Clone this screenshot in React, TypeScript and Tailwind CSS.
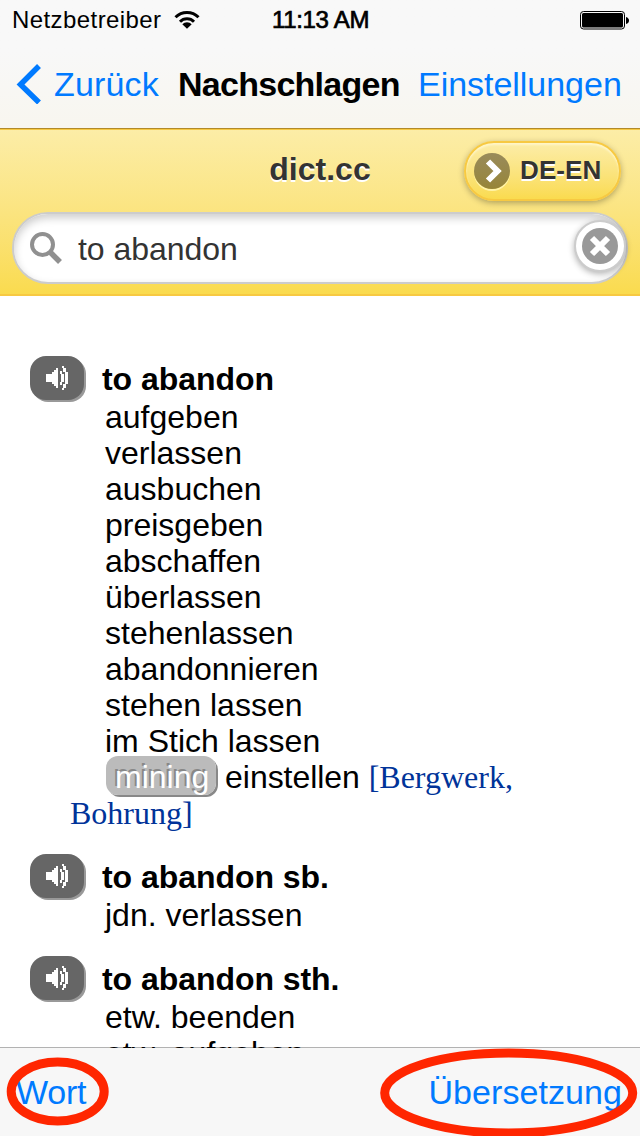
import type { ReactNode } from 'react';

function Speaker() {
  return (
    <span className="mb-0.5 flex h-11 w-[54px] shrink-0 items-center justify-center rounded-[16px] bg-[#666] shadow-[2px_2px_0_#999]">
      <svg width="22" height="26" viewBox="0 0 22 26" shapeRendering="crispEdges" fill="#fff">
        <path d="M0 9h6v-2h2v-2h2v-2h2v20h-2v-2h-2v-2h-2v-2h-6z" />
        <path d="M14 6h2v3h2v8h-2v3h-2v-3h1v-8h-1z" />
        <path d="M16 1h2v2h2v4h2v12h-2v4h-2v2h-2v-2h1v-4h2v-12h-2v-4h-1z" />
      </svg>
    </span>
  );
}

function Entry({ term, children }: { term: string; children: ReactNode }) {
  return (
    <section className="mb-7">
      <div className="flex h-9 items-center">
        <Speaker />
        <h2 className="ml-[18px] whitespace-nowrap font-bold tracking-[-0.05px]">{term}</h2>
      </div>
      <div className="mt-0.5 pl-10">{children}</div>
    </section>
  );
}

const line = 'pl-[35px] whitespace-nowrap';

const translations = [
  'aufgeben', 'verlassen', 'ausbuchen', 'preisgeben', 'abschaffen', 'überlassen',
  'stehenlassen', 'abandonnieren', 'stehen lassen', 'im Stich lassen',
];

export default function App() {
  return (
    <div className="relative flex h-[1136px] w-[640px] flex-col overflow-hidden bg-white font-['Liberation_Sans',Arial,sans-serif] text-black">
      <header className="h-32 shrink-0 bg-linear-to-b from-[#f8f8f8] from-40% to-[#f8f6ef]">
        <div className="grid h-10 grid-cols-3 items-center pr-[11px] pl-3 text-[24px] leading-10">
          <div className="flex items-center gap-3">
            <span className="tracking-[0.42px]">Netzbetreiber</span>
            <svg width="26" height="20" viewBox="0 0 26 20" fill="none" stroke="#000" strokeWidth="3">
              <path d="M1.5 7.2a16.2 16.2 0 0 1 23 0M6 11.7a9.9 9.9 0 0 1 14 0" />
              <path d="M8.3 14.2a6.6 6.6 0 0 1 9.4 0L13 18.8z" fill="#000" stroke="none" />
            </svg>
          </div>
          <span className="text-center tracking-[-0.3px] [-webkit-text-stroke:0.7px_#000]">11:13 AM</span>
          <svg className="justify-self-end" width="49" height="20" viewBox="0 0 49 20">
            <rect x="0.5" y="1.5" width="44" height="17.5" rx="3" fill="none" stroke="#000" />
            <rect x="2" y="3" width="41" height="14.5" rx="1.5" />
            <path d="M46 7q3 1 3 3.5t-3 3.5z" />
          </svg>
        </div>
        <nav className="flex h-[88px] items-center pl-4 text-[34px] leading-[88px]">
          <svg width="26" height="40" viewBox="0 0 26 40" fill="none" stroke="#007aff" strokeWidth="5.5">
            <path d="M23 2L4.5 20.5 23 38.5" />
          </svg>
          <span className="ml-3 w-[124px] tracking-[0.15px] text-[#007aff]">Zurück</span>
          <h1 className="w-[240px] font-bold tracking-[-0.73px]">Nachschlagen</h1>
          <span className="tracking-[-0.03px] text-[#007aff]">Einstellungen</span>
        </nav>
      </header>

      <div className="h-[168px] shrink-0 border-t border-b-2 border-t-[#b28a2a] border-b-[#f7c942] bg-linear-to-b from-[#fceda7] to-[#fadb4e] px-3 text-[#333] shadow-[inset_0_1px_0_#f7c942]">
        <div className="grid h-[83px] grid-cols-[1fr_auto_1fr] items-center">
          <span />
          <span className="pb-[3px] text-[32px] font-bold [text-shadow:0_2px_0_#fff]">dict.cc</span>
          <button className="mr-[7px] flex h-[60px] w-[157px] items-center justify-self-end rounded-full border-2 border-[#f7c942] bg-linear-to-b from-[#fceda7] to-[#fadb4e] pl-2 shadow-[0_2px_6px_rgba(0,0,0,0.3),inset_0_2px_2px_#fff6c8]">
            <svg width="36" height="36" viewBox="0 0 36 36" className="rounded-full bg-linear-to-b from-[#998b5a] to-[#978538] shadow-[0_2px_0_#fff3a8]">
              <path d="M14 8.5L23.5 18 14 27.5" fill="none" stroke="#fff" strokeWidth="6" />
            </svg>
            <span className="ml-[10px] text-[26px] font-bold tracking-[0.1px] [text-shadow:0_2px_0_#fff]">DE-EN</span>
          </button>
        </div>
        <div className="flex h-[72px] items-center rounded-full border-2 border-[#ccc] bg-white pl-4 shadow-[inset_0_4px_8px_rgba(0,0,0,0.2)]">
          <svg width="32" height="32" viewBox="0 0 32 32" fill="none" stroke="#909090">
            <circle cx="12.5" cy="12.5" r="10.5" strokeWidth="4" />
            <path d="M20 20L30 30" strokeWidth="5.5" />
          </svg>
          <span className="grow pt-0.5 pl-4 text-[32px] tracking-[-0.05px]">to abandon</span>
          <button className="mb-1 flex size-[52px] items-center justify-center rounded-full border-2 border-[#ccc] bg-white shadow-[0_2px_6px_rgba(0,0,0,0.3)]">
            <svg width="36" height="36" viewBox="0 0 36 36" className="rounded-full bg-[#999]">
              <path d="M10 10L26 26M26 10L10 26" stroke="#fff" strokeWidth="6" />
            </svg>
          </button>
        </div>
      </div>

      <main className="min-h-0 flex-1 overflow-hidden px-[30px] pt-[65px] text-[32px] leading-9">
        <Entry term="to abandon">
          {translations.map((t) => <p key={t} className={line}>{t}</p>)}
          <p className="indent-9 whitespace-nowrap">
            <span className="rounded-[12px] bg-[#bbb] pt-[3px] pr-[7px] pl-[9px] text-white shadow-[2px_2px_0_#888] [text-shadow:-2px_-2px_0_#888]">mining</span>
            <span className="tracking-[-0.05px]">{' einstellen '}</span>
            <span className="font-['Liberation_Serif',serif] text-[#039]">[Bergwerk,</span>
          </p>
          <p className="font-['Liberation_Serif',serif] text-[#039]">Bohrung]</p>
        </Entry>
        <Entry term="to abandon sb.">
          <p className={line}>jdn. verlassen</p>
        </Entry>
        <Entry term="to abandon sth.">
          <p className={line}>etw. beenden</p>
          <p className={line}>etw. aufgeben</p>
        </Entry>
      </main>

      <footer className="relative -mt-px flex h-[89px] shrink-0 items-center justify-between border-t border-black/30 bg-[#f7f7f7] bg-clip-padding pt-px pr-[18px] pl-4 text-[34px] text-[#007aff]">
        <span className="tracking-[-0.2px]">Wort</span>
        <span className="tracking-[0.07px]">Übersetzung</span>
      </footer>
      <svg className="pointer-events-none absolute bottom-0 left-0" width="640" height="96" viewBox="0 1040 640 96" fill="none" stroke="#ff2600" strokeWidth="9">
        <ellipse cx="57.7" cy="1091.5" rx="46.5" ry="29.5" />
        <ellipse cx="508.7" cy="1093" rx="124" ry="40" />
      </svg>
    </div>
  );
}
